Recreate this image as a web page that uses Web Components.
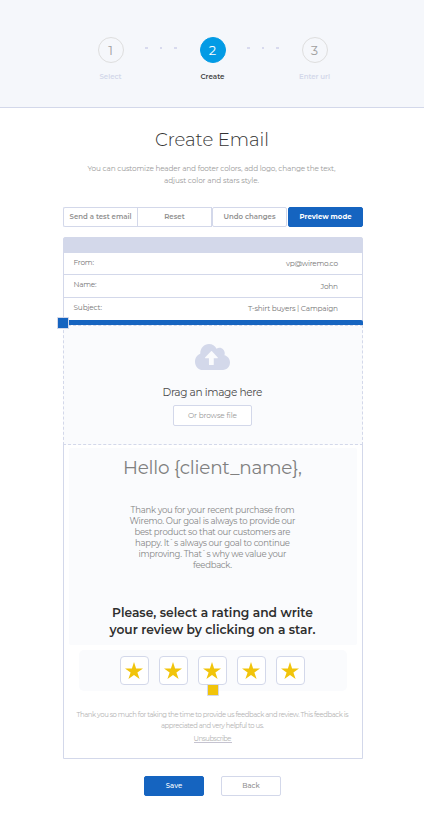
<!DOCTYPE html>
<html lang="en">
<head>
<meta charset="utf-8">
<title>Create Email</title>
<style>
html,body{margin:0;background:#fff}
body{width:424px;height:817px;overflow:hidden;font-family:Montserrat,Inter,"Open Sans",sans-serif;color:#858585}
</style>
</head>
<body>
<email-page></email-page>
<script>
const define = (name, html, init) => {
  const t = document.createElement('template');
  t.innerHTML = '<style>*{box-sizing:border-box}</style>' + html;
  customElements.define(name, class extends HTMLElement {
    connectedCallback() {
      if (this.shadowRoot) return;
      this.attachShadow({mode: 'open'}).append(t.content.cloneNode(true));
      if (init) init(this, this.shadowRoot);
    }
  });
};

// One line of text at font size s and line height h, tracked so that it takes the width w.
define('fit-line', `<style>
:host{display:block;text-align:inherit;white-space:nowrap}
span{display:inline-block;white-space:pre;vertical-align:top}
</style><span><slot></slot></span>`, (el, root) => {
  const span = root.querySelector('span');
  const s = +el.getAttribute('s'), h = el.getAttribute('h'), w = +el.getAttribute('w');
  el.style.lineHeight = el.style.height = h + 'px';
  el.style.fontSize = s + 'px';
  const size = Math.max(s * .98, Math.min(s * 1.04, s * w / span.getBoundingClientRect().width));
  el.style.fontSize = size + 'px';
  const gap = (w - span.getBoundingClientRect().width) / (el.textContent.length - 1);
  span.style.letterSpacing = gap + 'px';
  span.style.marginRight = -gap + 'px';
});

define('step-item', `<style>
:host{display:flex;flex-direction:column;align-items:center;width:36px;color:#d3d8ea;font-weight:600}
.c{width:26px;height:26px;border:1px solid #dedede;border-radius:50%;font-size:13px;font-weight:400;line-height:25px;text-align:center;color:#a0a0a0;margin-bottom:9px}
:host([active]){color:#444}
:host([active]) .c{background:#039be5;border-color:#039be5;color:#fff}
</style><div class="c"><slot name="n"></slot></div><slot></slot>`);

define('step-dots', `<style>
:host{display:flex;justify-content:space-between;width:32px;margin:10px 18px 0 16px}
i{width:3px;height:2px;background:#d8daee}i:nth-of-type(2){width:2px}
</style><i></i><i></i><i></i>`);

define('step-bar', `<style>
:host{display:flex;justify-content:center;align-items:flex-start;height:108px;padding:37px 0 0 1px;background:#f5f7fb;border-bottom:1px solid #d3d8ea}
</style>
<step-item><span slot="n">1</span><fit-line s="7.2" h="10" w="22">Select</fit-line></step-item><step-dots></step-dots>
<step-item active><span slot="n">2</span><fit-line s="7.2" h="10" w="24">Create</fit-line></step-item><step-dots></step-dots>
<step-item><span slot="n">3</span><fit-line s="7.2" h="10" w="31">Enter url</fit-line></step-item>`);

define('ui-button', `<style>
:host{display:flex;align-items:center;justify-content:center;height:20px;border:1px solid #d3d8ea;border-radius:2px;background:#fff;color:#8f8f8f;font-weight:600}
:host([primary]){background:#1564c0;border-color:#1564c0;color:#fff;font-weight:700}
</style><slot></slot>`);

define('tool-bar', `<style>
:host{display:grid;grid-template-columns:74px 75px 76px 75px;width:300px;margin:20px 0 10px 63px}
ui-button:nth-of-type(1){border-radius:2px 0 0 2px;border-right-width:0}
ui-button:nth-of-type(2){border-radius:0}
ui-button:nth-of-type(3){border-radius:2px;margin-right:1px}
</style>
<ui-button><fit-line s="7" h="18" w="62">Send a test email</fit-line></ui-button>
<ui-button><fit-line s="7" h="18" w="20.500">Reset</fit-line></ui-button>
<ui-button><fit-line s="7" h="18" w="52">Undo changes</fit-line></ui-button>
<ui-button primary><fit-line s="7" h="18" w="52">Preview mode</fit-line></ui-button>`);

define('meta-row', `<style>
:host{display:flex;justify-content:space-between;height:23px;padding:0 24px 0 9.5px;border-bottom:1px solid #d3d8ea;color:#777}
</style><slot></slot>`);

define('drag-handle', `<style>
:host{display:block;position:absolute;width:12px;height:12px;border:1px solid #d3d8ea;border-radius:1px;background:var(--fill)}
</style>`);

define('drop-zone', `<style>
:host{display:flex;flex-direction:column;align-items:center;height:120px;margin:0 -1px;padding:18px 1px 0 0;background:#fafbfd;border:1px dashed #d3d8ea}
svg{width:35px;height:26px;fill:#d3d8ea;margin-bottom:14px}
fit-line{color:#4a4a4a}
ui-button{width:79px;height:21px;margin-top:4px;font-weight:400}
ui-button fit-line{color:#999}
</style>
<svg viewBox="0 32 640 448" preserveAspectRatio="none"><path d="M537.6 226.600c4.100-10.700 6.400-22.400 6.400-34.600 0-53-43-96-96-96-19.700 0-38.100 6-53.300 16.200C367 64.200 315.300 32 256 32c-88.400 0-160 71.600-160 160 0 2.700.1 5.400.2 8.100C40.200 219.800 0 273.200 0 336c0 79.500 64.500 144 144 144h368c70.700 0 128-57.300 128-128 0-61.900-44-113.600-102.400-125.400zM410 276H343v108q0 10-10 10h-68q-10 0-10-10V276H188q-12 0-4-10L293 158q9-8 18 0l105 108q8 10-6 10z"/></svg>
<fit-line s="10.800" h="17" w="100">Drag an image here</fit-line>
<ui-button><fit-line s="7.5" h="17" w="49">Or browse file</fit-line></ui-button>`);

define('star-box', `<style>
:host{display:flex;align-items:center;justify-content:center;position:relative;width:29px;height:29px;padding-right:1px;border:1px solid #d3d8ea;border-radius:4px;background:#fff}
svg{width:18px;height:17px;fill:#f1c40a}
</style><svg viewBox="0 0 18 17"><path d="M9 0l2.100 6.500H18l-5.600 4 2.200 6.500L9 13l-5.600 4 2.200-6.500L0 6.500h6.900z"/></svg><slot></slot>`);

define('email-card', `<style>
:host{display:block;position:relative;width:300px;height:522px;margin:0 0 0 63px;border:1px solid #d3d8ea;border-radius:2px 2px 0 0;text-align:center}
.head{height:15px;background:#d3d8ea}
meta-row:nth-of-type(1){height:22px}
meta-row:nth-of-type(3){height:22px;border:0}
.bar{height:5px;margin:0 -1px;background:#1564c0;border-radius:0 2px 0 0}
.copy{height:197px;margin:3px 5px 5px;padding:7px 1px 0 0;background:#fafbfd;border-radius:2px}
.hello{color:#808080;font-weight:400;margin-bottom:25px}
.please{margin-top:33px;color:#2e2e2e;font-weight:600}
.stars{display:flex;justify-content:center;gap:10px;width:268px;height:41px;margin:0 auto;padding:6px 1px 0 0;background:#fafbfd;border-radius:5px}
.foot{padding:18px 1px 0 0;color:#b4b4b4}
.unsub{display:block;width:38px;margin:2px auto 0;border-bottom:1px solid #c5c3d0;height:10px}
</style>
<div class="head"></div>
<meta-row><fit-line s="7.5" h="20" w="20.500">From:</fit-line><fit-line s="7.5" h="22" w="52">vp@wiremo.co</fit-line></meta-row>
<meta-row><fit-line s="7.5" h="20" w="23">Name:</fit-line><fit-line s="7.5" h="24" w="17.500">John</fit-line></meta-row>
<meta-row><fit-line s="7.5" h="20" w="28.500">Subject:</fit-line><fit-line s="7.5" h="22" w="90">T-shirt buyers | Campaign</fit-line></meta-row>
<div class="bar"></div>
<drop-zone></drop-zone>
<div class="copy">
<fit-line class="hello" s="18.800" h="25" w="179">Hello {client_name},</fit-line>
<fit-line s="8.700" h="11" w="164">Thank you for your recent purchase from</fit-line>
<fit-line s="8.700" h="11" w="166">Wiremo. Our goal is always to provide our</fit-line>
<fit-line s="8.700" h="11" w="156">best product so that our customers are</fit-line>
<fit-line s="8.700" h="11" w="155">happy. It\`s always our goal to continue</fit-line>
<fit-line s="8.700" h="11" w="148">improving. That\`s why we value your</fit-line>
<fit-line s="8.700" h="11" w="39">feedback.</fit-line>
<div class="please">
<fit-line s="12" h="17" w="201">Please, select a rating and write</fit-line>
<fit-line s="12" h="17" w="206">your review by clicking on a star.</fit-line>
</div>
</div>
<div class="stars"><star-box></star-box><star-box></star-box><star-box><drag-handle style="--fill:#f1c40a;left:8px;top:27px"></drag-handle></star-box><star-box></star-box><star-box></star-box></div>
<div class="foot">
<fit-line s="7" h="11" w="272">Thank you so much for taking the time to provide us feedback and review. This feedback is</fit-line>
<fit-line s="7" h="11" w="103">appreciated and very helpful to us.</fit-line>
<div class="unsub"><fit-line s="7" h="11" w="38">Unsubscribe</fit-line></div>
</div>
<drag-handle style="--fill:#1564c0;left:-7px;top:79px"></drag-handle>`);

define('email-page', `<style>
:host{display:block;text-align:center}
.title{margin-top:20px;color:#333;font-weight:300}
.sub{margin-top:11px;color:#9c9c9c;padding-right:1px}
.actions{display:flex;justify-content:center;gap:17px;margin-top:17px;padding-left:1px}
.actions ui-button{width:60px;font-weight:500}
</style>
<step-bar></step-bar>
<fit-line class="title" s="18.500" h="24" w="114">Create Email</fit-line>
<div class="sub">
<fit-line s="7.5" h="12" w="248">You can customize header and footer colors, add logo, change the text,</fit-line>
<fit-line s="7.5" h="12" w="95">adjust color and stars style.</fit-line>
</div>
<tool-bar></tool-bar>
<email-card></email-card>
<div class="actions">
<ui-button primary><fit-line s="7" h="18" w="16.500">Save</fit-line></ui-button>
<ui-button><fit-line s="7" h="18" w="17.500">Back</fit-line></ui-button>
</div>`);
</script>
</body>
</html>
